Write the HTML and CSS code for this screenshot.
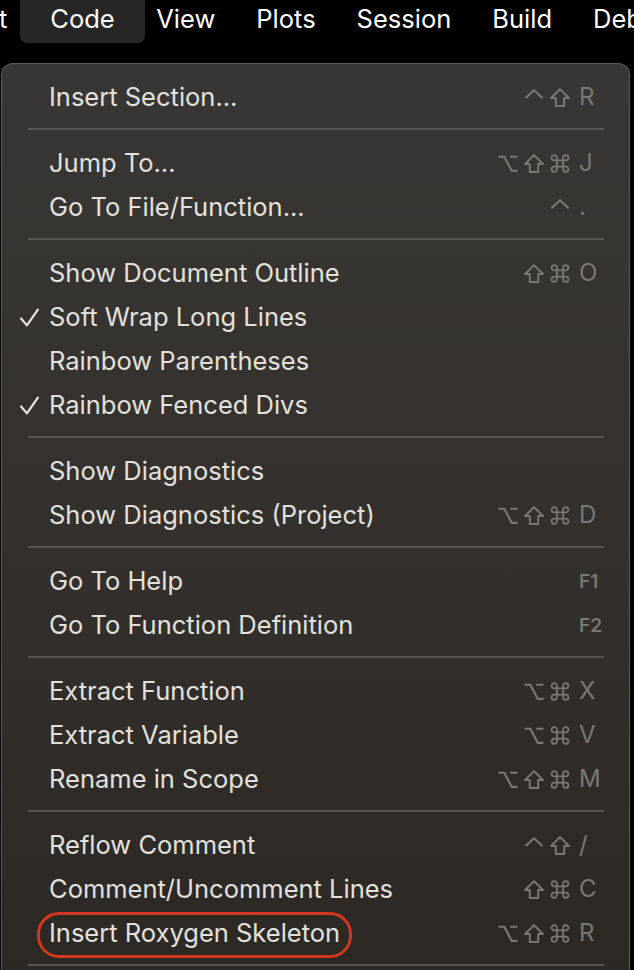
FILE: index.html
```html
<!DOCTYPE html>
<html>
<head>
<meta charset="utf-8">
<link rel="stylesheet" href="styles.css">
</head>
<body>
<svg width="0" height="0" class="defs">
  <defs>
    <symbol id="ctrl" viewBox="0 0 20 20"><path d="M2.5 10 L10 3 L17.5 10" fill="none" stroke="currentColor" stroke-width="2" stroke-linecap="round" stroke-linejoin="round"/></symbol>
    <symbol id="shift" viewBox="0 0 20 20"><path d="M10 2 L18.5 10.5 L14 10.5 L14 18 L6 18 L6 10.5 L1.5 10.5 Z" fill="none" stroke="currentColor" stroke-width="1.9" stroke-linejoin="round"/></symbol>
    <symbol id="cmd" viewBox="0 0 20 20"><path d="M7 7 V4.5 A2.5 2.5 0 1 0 4.5 7 H15.5 A2.5 2.5 0 1 0 13 4.5 V15.5 A2.5 2.5 0 1 0 15.5 13 H4.5 A2.5 2.5 0 1 0 7 15.5 Z" fill="none" stroke="currentColor" stroke-width="1.7" stroke-linejoin="round"/></symbol>
    <symbol id="opt" viewBox="0 0 20 20"><path d="M1 3.5 H6.5 L13.5 17 H19 M12 3.5 H19" fill="none" stroke="currentColor" stroke-width="2" stroke-linejoin="round"/></symbol>
    <symbol id="check" viewBox="0 0 20 20"><path d="M2 11 L7.5 17.5 L18 2.5" fill="none" stroke="currentColor" stroke-width="2.2" stroke-linecap="round" stroke-linejoin="round"/></symbol>
  </defs>
</svg>

<div class="menubar">
  <span class="mb-item mb-edge">t</span>
  <span class="mb-item mb-active">Code</span>
  <span class="mb-item">View</span>
  <span class="mb-item">Plots</span>
  <span class="mb-item">Session</span>
  <span class="mb-item">Build</span>
  <span class="mb-item mb-last">Deb</span>
</div>

<div class="menu">
  <div class="row"><span class="ck"></span><span class="label">Insert Section...</span>
    <span class="sc"><span class="mods"><svg class="m"><use href="#ctrl"/></svg><svg class="m"><use href="#shift"/></svg></span><span class="key">R</span></span></div>
  <div class="sep"></div>

  <div class="row"><span class="ck"></span><span class="label">Jump To...</span>
    <span class="sc"><span class="mods"><svg class="m"><use href="#opt"/></svg><svg class="m"><use href="#shift"/></svg><svg class="m"><use href="#cmd"/></svg></span><span class="key">J</span></span></div>
  <div class="row"><span class="ck"></span><span class="label">Go To File/Function...</span>
    <span class="sc"><span class="mods"><svg class="m"><use href="#ctrl"/></svg></span><span class="key">.</span></span></div>
  <div class="sep"></div>

  <div class="row"><span class="ck"></span><span class="label">Show Document Outline</span>
    <span class="sc"><span class="mods"><svg class="m"><use href="#shift"/></svg><svg class="m"><use href="#cmd"/></svg></span><span class="key">O</span></span></div>
  <div class="row"><span class="ck"><svg class="c"><use href="#check"/></svg></span><span class="label">Soft Wrap Long Lines</span></div>
  <div class="row"><span class="ck"></span><span class="label">Rainbow Parentheses</span></div>
  <div class="row"><span class="ck"><svg class="c"><use href="#check"/></svg></span><span class="label">Rainbow Fenced Divs</span></div>
  <div class="sep"></div>

  <div class="row"><span class="ck"></span><span class="label">Show Diagnostics</span></div>
  <div class="row"><span class="ck"></span><span class="label">Show Diagnostics (Project)</span>
    <span class="sc"><span class="mods"><svg class="m"><use href="#opt"/></svg><svg class="m"><use href="#shift"/></svg><svg class="m"><use href="#cmd"/></svg></span><span class="key">D</span></span></div>
  <div class="sep"></div>

  <div class="row"><span class="ck"></span><span class="label">Go To Help</span>
    <span class="sc"><span class="mods"></span><span class="key fk">F1</span></span></div>
  <div class="row"><span class="ck"></span><span class="label">Go To Function Definition</span>
    <span class="sc"><span class="mods"></span><span class="key fk">F2</span></span></div>
  <div class="sep"></div>

  <div class="row"><span class="ck"></span><span class="label">Extract Function</span>
    <span class="sc"><span class="mods"><svg class="m"><use href="#opt"/></svg><svg class="m"><use href="#cmd"/></svg></span><span class="key">X</span></span></div>
  <div class="row"><span class="ck"></span><span class="label">Extract Variable</span>
    <span class="sc"><span class="mods"><svg class="m"><use href="#opt"/></svg><svg class="m"><use href="#cmd"/></svg></span><span class="key">V</span></span></div>
  <div class="row"><span class="ck"></span><span class="label">Rename in Scope</span>
    <span class="sc"><span class="mods"><svg class="m"><use href="#opt"/></svg><svg class="m"><use href="#shift"/></svg><svg class="m"><use href="#cmd"/></svg></span><span class="key">M</span></span></div>
  <div class="sep"></div>

  <div class="row"><span class="ck"></span><span class="label">Reflow Comment</span>
    <span class="sc"><span class="mods"><svg class="m"><use href="#ctrl"/></svg><svg class="m"><use href="#shift"/></svg></span><span class="key">/</span></span></div>
  <div class="row"><span class="ck"></span><span class="label">Comment/Uncomment Lines</span>
    <span class="sc"><span class="mods"><svg class="m"><use href="#shift"/></svg><svg class="m"><use href="#cmd"/></svg></span><span class="key">C</span></span></div>
  <div class="row"><span class="ck"></span><span class="label circled">Insert Roxygen Skeleton</span>
    <span class="sc"><span class="mods"><svg class="m"><use href="#opt"/></svg><svg class="m"><use href="#shift"/></svg><svg class="m"><use href="#cmd"/></svg></span><span class="key">R</span></span></div>
  <div class="sep"></div>
</div>
</body>
</html>
```

FILE: styles.css
```css
html, body {
  margin: 0;
  padding: 0;
  background: #000;
  overflow: hidden;
}
body {
  width: 634px;
  height: 970px;
  font-family: Inter, "Noto Sans", sans-serif;
  -webkit-font-smoothing: antialiased;
}
.defs { position: absolute; }

.menubar {
  height: 43px;
  display: flex;
  align-items: flex-start;
  color: #fff;
  font-size: 25.5px;
  white-space: nowrap;
  overflow: hidden;
}
.mb-item {
  padding: 0 20.5px;
  line-height: 38px;
}
.mb-edge {
  padding: 0 21px 0 0;
  margin-left: -1px;
}
.mb-active {
  background: #262626;
  padding: 0 30px 5px;
  margin: 0 -9px 0 -8px;
  border-radius: 0 0 7px 7px;
}
.mb-last {
  padding-right: 0;
}

.menu {
  margin: 20px 0 0 1px;
  width: 629px;
  height: 920px;
  box-sizing: border-box;
  border: 1px solid #5b5957;
  border-bottom: none;
  border-radius: 12px 12px 0 0;
  box-shadow: 0 0 0 1px #0a0a0a;
  background: linear-gradient(180deg, #393735 0%, #34312e 45%, #2c2925 100%);
  padding-top: 11px;
  color: #e3e1de;
  font-size: 25.5px;
}
.row {
  display: flex;
  align-items: center;
  height: 44px;
  padding: 0 26px 0 17px;
}
.ck {
  width: 30px;
  flex: none;
  display: flex;
  align-items: center;
}
.c {
  width: 21px;
  height: 21px;
  color: #e3e1de;
}
.label {
  flex: 1;
  white-space: nowrap;
  line-height: 30px;
}
.circled {
  flex: none;
  position: relative;
}
.circled::after {
  content: "";
  position: absolute;
  left: -12px;
  right: -12px;
  top: -6px;
  bottom: -10px;
  border: 3px solid #d4371f;
  border-radius: 22px;
}
.circled + .sc { margin-left: auto; }

.sc {
  display: flex;
  align-items: center;
  color: #7a7875;
}
.mods {
  display: flex;
  align-items: center;
  gap: 4px;
}
.m {
  width: 22px;
  height: 21px;
}
.key {
  width: 24px;
  margin-left: 8px;
  font-size: 24px;
  line-height: 1;
}
.fk {
  font-size: 19px;
  font-weight: 600;
}
.sep {
  height: 2px;
  background: #575553;
  margin: 9px 25px 11px 26px;
}
```
